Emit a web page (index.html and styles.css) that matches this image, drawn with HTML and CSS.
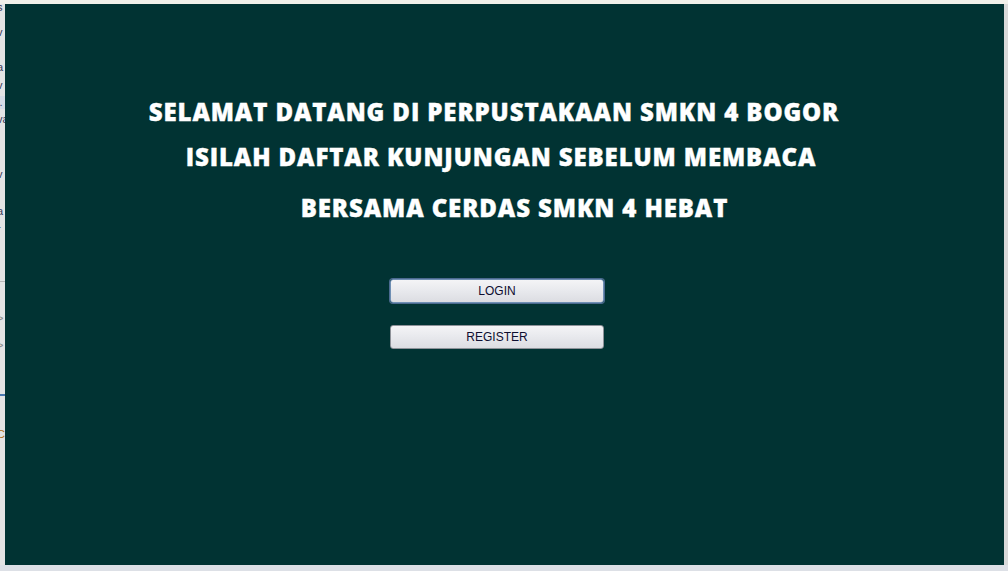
FILE: index.html
```html
<!DOCTYPE html>
<html lang="id">
<head>
<meta charset="utf-8">
<title>Perpustakaan SMKN 4 Bogor</title>
<link rel="stylesheet" href="styles.css">
</head>
<body>
<div class="frame">
  <div class="side">
    <span class="frag f1">s</span>
    <span class="frag f2">v</span>
    <span class="frag f3">j</span>
    <span class="frag f4">a</span>
    <span class="frag f5">v</span>
    <span class="frag f6">l.</span>
    <span class="frag f7">va</span>
    <span class="frag f8">v</span>
    <span class="frag f9">a</span>
    <span class="frag f10">r</span>
    <span class="sep s1"></span>
    <span class="frag f11">&gt;</span>
    <span class="frag f12">&gt;</span>
    <span class="sep s2"></span>
    <span class="frag f13">C</span>
  </div>
  <main class="panel">
    <h1 class="line line1">SELAMAT DATANG DI PERPUSTAKAAN SMKN 4 BOGOR</h1>
    <h2 class="line line2">ISILAH DAFTAR KUNJUNGAN SEBELUM MEMBACA</h2>
    <h2 class="line line3">BERSAMA CERDAS SMKN 4 HEBAT</h2>
    <div class="actions">
      <button class="btn btn-focus" type="button">LOGIN</button>
      <button class="btn" type="button">REGISTER</button>
    </div>
  </main>
  <div class="rside"></div>
</div>
</body>
</html>
```

FILE: styles.css
```css
html, body {
  margin: 0;
  padding: 0;
  width: 1008px;
  height: 571px;
  overflow: hidden;
  background: #e6e6e6;
}

.frame {
  display: flex;
  width: 1008px;
  height: 571px;
  box-sizing: border-box;
  border-top: 4px solid #f1f0ea;
  border-bottom: 6px solid #dde0e6;
}

.side {
  width: 5px;
  flex: none;
  background: #e4e4e4;
  overflow: hidden;
  display: flex;
  flex-direction: column;
  font-family: "Liberation Sans", Arial, sans-serif;
  font-size: 11px;
  color: #3a3a5a;
  line-height: 13px;
}

.frag { display: block; margin-left: -3px; height: 13px; white-space: nowrap; }
.f1 { margin-top: -3px; }
.f2 { margin-top: 12px; }
.f3 { margin-top: 5px; }
.f4 { margin-top: 4px; }
.f5 { margin-top: 5px; }
.f6 { margin-top: 4px; color: #3a4a70; background: #d6dce6; }
.f7 { margin-top: 4px; }
.f8 { margin-top: 42px; }
.f9 { margin-top: 24px; }
.f10 { margin-top: 5px; }
.f11 { margin-top: 30px; color: #888; }
.f12 { margin-top: 14px; color: #888; }
.f13 { margin-top: 32px; color: #b07020; }
.sep { display: block; flex: none; height: 1px; background: #b8b8b8; }
.s1 { margin-top: 45px; }
.s2 { margin-top: 42px; height: 2px; background: #4a78b0; }

.rside {
  width: 4px;
  flex: none;
  background: #d9d9d9;
}

.panel {
  flex: 1;
  background: #013333;
  display: flex;
  flex-direction: column;
  align-items: center;
  padding-top: 92px;
  box-sizing: border-box;
}

.line {
  margin: 0;
  font-family: "Open Sans", "DejaVu Sans", sans-serif;
  font-weight: 800;
  font-size: 24px;
  letter-spacing: 0.9px;
  line-height: 31px;
  color: #ffffff;
  -webkit-text-stroke: 0.4px #ffffff;
  white-space: nowrap;
}

.line1 { padding-right: 21px; }
.line2 { margin-top: 14px; padding-right: 7px; }
.line3 { margin-top: 20px; padding-left: 20px; }

.actions {
  margin-top: 56px;
  padding-right: 15px;
  display: flex;
  flex-direction: column;
  gap: 22px;
}

.btn {
  width: 214px;
  height: 24px;
  margin: 0;
  padding: 1px 0 0;
  border: 1px solid #8e9299;
  border-radius: 3px;
  background: linear-gradient(#f4f4f6 0%, #e9eaee 45%, #dcdde2 100%);
  font-family: "Liberation Sans", Arial, sans-serif;
  font-size: 12px;
  color: #0e0e30;
  text-align: center;
  line-height: 21px;
  box-sizing: border-box;
}

.btn-focus {
  border-color: #6f8fb4;
  box-shadow: 0 0 0 1px #4b6a90;
}
```
